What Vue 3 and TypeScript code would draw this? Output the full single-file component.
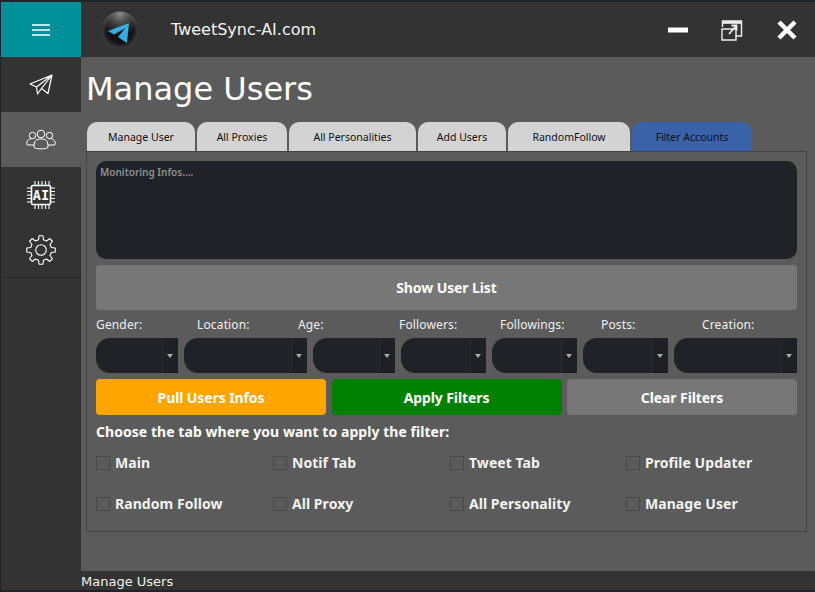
<script setup lang="ts">
const tabs = ['Manage User', 'All Proxies', 'All Personalities', 'Add Users', 'RandomFollow', 'Filter Accounts']
const tabWidths = [108, 90, 127, 88, 122, 120]
const labels = ['Gender:', 'Location:', 'Age:', 'Followers:', 'Followings:', 'Posts:', 'Creation:']
const combos = [82, 123, 82, 85, 85, 85, 123]
const checks = ['Main', 'Notif Tab', 'Tweet Tab', 'Profile Updater', 'Random Follow', 'All Proxy', 'All Personality', 'Manage User']

function gearPath(): string {
  const pts: string[] = []
  const teeth = 8
  for (let i = 0; i < teeth; i++) {
    const a = (i / teeth) * Math.PI * 2 - Math.PI / 2
    const step = (Math.PI * 2) / teeth
    const offs: [number, number][] = [
      [-0.3, 10.6],
      [-0.17, 14.4],
      [0.17, 14.4],
      [0.3, 10.6],
    ]
    for (const [f, r] of offs) {
      const t = a + f * step
      pts.push(`${(15 + r * Math.cos(t)).toFixed(2)} ${(15 + r * Math.sin(t)).toFixed(2)}`)
    }
  }
  return 'M' + pts.join('L') + 'Z'
}
const gear = gearPath()
</script>

<template>
  <div class="window">
    <aside class="sidebar">
      <div class="menu">
        <svg width="18" height="12" viewBox="0 0 18 12"><path d="M0 1h18M0 6h18M0 11h18" stroke="#fff" stroke-width="1.6" /></svg>
      </div>
      <div class="nav">
        <svg width="24" height="22" viewBox="0 0 24 22" fill="none" stroke="#fff" stroke-width="1.2" stroke-linejoin="round"><path d="M23 1 1 10l6.500 3L23 1 12.500 14.500 19 19.500 23 1ZM7.500 13 8.500 20l4-5.500" /></svg>
      </div>
      <div class="nav active">
        <svg width="30" height="21" viewBox="0 0 30 21" fill="none" stroke="#fff" stroke-width="1"><circle cx="15" cy="5" r="3.800" /><circle cx="6.500" cy="6.500" r="3.200" /><circle cx="23.500" cy="6.500" r="3.200" /><path d="M8 18c0-6.500 2-8 7-8s7 1.500 7 8c0 2.500-14 2.500-14 0Z" /><path d="M8 16H2c-1.500 0-1.500-1-1-3 .5-2 2-3.500 5.500-3.500M22 16h6c1.500 0 1.500-1 1-3-.5-2-2-3.500-5.500-3.500" /></svg>
      </div>
      <div class="nav">
        <svg width="30" height="30" viewBox="0 0 30 30" fill="none" stroke="#fff"><rect x="5.500" y="5.500" width="19" height="19" rx="1.500" stroke-width="1.600" /><path d="M9 1v4M12.500 1v4M16 1v4M19.500 1v4M23 1v4M9 25v4M12.500 25v4M16 25v4M19.500 25v4M23 25v4M1 8h4M1 11.500h4M1 15h4M1 18.500h4M1 22h4M25 8h4M25 11.500h4M25 15h4M25 18.500h4M25 22h4" stroke-width="1.100" /><text x="15" y="19.500" text-anchor="middle" class="ai">AI</text></svg>
      </div>
      <div class="nav">
        <svg width="30" height="30" viewBox="0 0 30 30" fill="none" stroke="#fff" stroke-width="1.100" stroke-linejoin="round"><circle cx="15" cy="15" r="5.300" /><path :d="gear" /></svg>
      </div>
      <div class="rest"></div>
    </aside>

    <div class="main">
      <header class="topbar">
        <svg class="logo" width="38" height="38" viewBox="0 0 38 38">
          <defs>
            <radialGradient id="sphere" cx="50%" cy="50%" r="55%">
              <stop offset="0" stop-color="#0a0a0b" />
              <stop offset=".65" stop-color="#141416" />
              <stop offset=".9" stop-color="#3a3a3d" />
              <stop offset="1" stop-color="#55555a" />
            </radialGradient>
            <radialGradient id="shine" cx="50%" cy="8%" r="60%">
              <stop offset="0" stop-color="#9a9a9a" stop-opacity=".85" />
              <stop offset="1" stop-color="#555" stop-opacity="0" />
            </radialGradient>
          </defs>
          <circle cx="19" cy="19" r="18.500" fill="url(#sphere)" />
          <circle cx="19" cy="19" r="18.500" fill="url(#shine)" />
          <path d="M7 20 28 12 26 32 17 26 24.500 17 13 23.500Z" fill="#38ade3" />
        </svg>
        <span class="brand">TweetSync-AI.com</span>
        <div class="controls">
          <svg width="20" height="6" viewBox="0 0 20 6"><rect width="20" height="5" y="0.500" fill="#fff" /></svg>
          <svg width="22" height="22" viewBox="0 0 22 22" fill="none" stroke="#eee" stroke-width="1.400"><path d="M1.500 8V2h19v15h-6" /><path d="M1 3.500h20" stroke-width="2.600" /><path d="M1 10h14v11H1z" /><path d="M8 15l7-8M10.500 6.500H15.500V11.500" stroke-width="1.800" /></svg>
          <svg width="22" height="22" viewBox="0 0 22 22"><path d="M3 3l16 16M19 3 3 19" stroke="#fff" stroke-width="4.500" /></svg>
        </div>
      </header>

      <div class="page">
        <h1 class="title">Manage Users</h1>
        <div class="tabs">
          <div
            v-for="(t, i) in tabs"
            :key="t"
            class="tab"
            :class="{ selected: i === tabs.length - 1 }"
            :style="{ width: tabWidths[i] + 'px' }"
          >{{ t }}</div>
        </div>
        <section class="panel">
          <div class="monitor">Monitoring Infos....</div>
          <button class="btn show">Show User List</button>
          <div class="labels">
            <span v-for="l in labels" :key="l">{{ l }}</span>
          </div>
          <div class="combos">
            <div v-for="(w, i) in combos" :key="i" class="combo" :style="{ width: w + 'px' }">
              <span class="drop"><i></i></span>
            </div>
          </div>
          <div class="actions">
            <button class="btn orange">Pull Users Infos</button>
            <button class="btn green">Apply Filters</button>
            <button class="btn grey">Clear Filters</button>
          </div>
          <p class="choose">Choose the tab where you want to apply the filter:</p>
          <div class="checks">
            <label v-for="c in checks" :key="c" class="check"><span class="box"></span>{{ c }}</label>
          </div>
        </section>
      </div>
      <footer class="status">Manage Users</footer>
    </div>
  </div>
</template>

<style>
html, body { margin: 0; background: #1f232a; }
</style>

<style scoped>
.window {
  width: 815px;
  height: 592px;
  box-sizing: border-box;
  padding: 2px 0 2px 1px;
  display: flex;
  background: #1f232a;
  overflow: hidden;
  font-family: "Noto Sans", sans-serif;
}
.sidebar {
  width: 80px;
  flex: none;
  display: flex;
  flex-direction: column;
  background: #333;
}
.menu, .nav {
  height: 55px;
  display: flex;
  align-items: center;
  justify-content: center;
  flex: none;
}
.menu { background: #00909a; }
.nav.active { background: #5b5b5b; }
.rest { flex: 1; border-top: 1px solid #2a2a2a; }
.ai { font: 700 13.500px "DejaVu Sans Mono", monospace; fill: #fff; stroke: none; }
.main {
  flex: 1;
  min-width: 0;
  display: flex;
  flex-direction: column;
  background: #5b5b5b;
}
.topbar {
  height: 55px;
  flex: none;
  display: flex;
  align-items: center;
  background: #333;
  color: #fff;
}
.logo { margin-left: 20px; }
.brand {
  margin-left: 32px;
  font: 16px "DejaVu Sans", sans-serif;
  color: #f2f2f2;
}
.controls {
  margin-left: auto;
  margin-right: 17px;
  display: flex;
  align-items: center;
  gap: 33px;
}
.page {
  flex: 1;
  min-height: 0;
  padding: 0 0 0 5px;
  box-sizing: border-box;
}
.title {
  margin: 14px 0 0;
  height: 51px;
  font: 400 32px/36px "DejaVu Sans", sans-serif;
  color: #fff;
}
.tabs { display: flex; gap: 2px; height: 29px; margin-left: 1px; }
.tab {
  box-sizing: border-box;
  background: #d3d3d3;
  border-radius: 10px 10px 0 0;
  color: #111;
  font-size: 10.500px;
  line-height: 30px;
  text-align: center;
}
.tab.selected { background: #3a62a8; }
.panel {
  width: 721px;
  height: 381px;
  box-sizing: border-box;
  padding: 9px 9px 0;
  border: 1px solid #444;
  background: #5b5b5b;
  color: #fff;
}
.monitor {
  height: 98px;
  box-sizing: border-box;
  padding: 4px 4px;
  background: #1f2328;
  border-radius: 10px;
  color: #909090;
  font-size: 10px;
  font-weight: 600;
}
.btn {
  display: block;
  border: 0;
  border-radius: 4px;
  color: #fff;
  font: 700 14px "Noto Sans", sans-serif;
  letter-spacing: -0.1px;
  padding: 0;
}
.show {
  width: 100%;
  height: 45px;
  margin-top: 6px;
  background: #777;
}
.labels {
  display: grid;
  grid-template-columns: repeat(7, 101px);
  margin-top: 7px;
  height: 21px;
  font-size: 12px;
  letter-spacing: 0.15px;
  line-height: 16px;
  color: #eee;
}
.combos { display: flex; gap: 6px; }
.combo {
  position: relative;
  height: 35px;
  background: #1f2328;
  border-radius: 14px 0 0 14px;
}
.drop {
  position: absolute;
  right: 0;
  top: 1px;
  bottom: 0;
  width: 15px;
  background: #1d2025;
  border-left: 1px solid #282c31;
  box-shadow: inset 0 -1px 0 #15171a;
}
.drop i {
  position: absolute;
  left: 4px;
  top: 15px;
  border: solid transparent;
  border-width: 4px 3.500px 0;
  border-top-color: #aaa;
}
.actions {
  display: grid;
  grid-template-columns: 230px 230px 230px;
  column-gap: 5.500px;
  margin-top: 6px;
}
.actions .btn { height: 36px; }
.orange { background: #ffa500; }
.green { background: #008000; }
.grey { background: #777; }
.choose {
  margin: 7px 0 0;
  font-size: 14px;
  font-weight: 700;
  letter-spacing: 0.05px;
  line-height: 20px;
}
.checks {
  display: grid;
  grid-template-columns: 177px 177px 176px 1fr;
  grid-auto-rows: 41px;
}
.check {
  display: flex;
  align-items: center;
  height: 41px;
  font-size: 14px;
  font-weight: 700;
  letter-spacing: 0.05px;
  color: #f2f2f2;
}
.box {
  width: 12px;
  height: 12px;
  margin: 0 5px 0 0;
  border: 1px solid #484848;
  border-radius: 1px;
  flex: none;
}
.status {
  height: 19px;
  flex: none;
  background: #333;
  color: #f0f0f0;
  font: 13px/21px "DejaVu Sans", sans-serif;
}
</style>
